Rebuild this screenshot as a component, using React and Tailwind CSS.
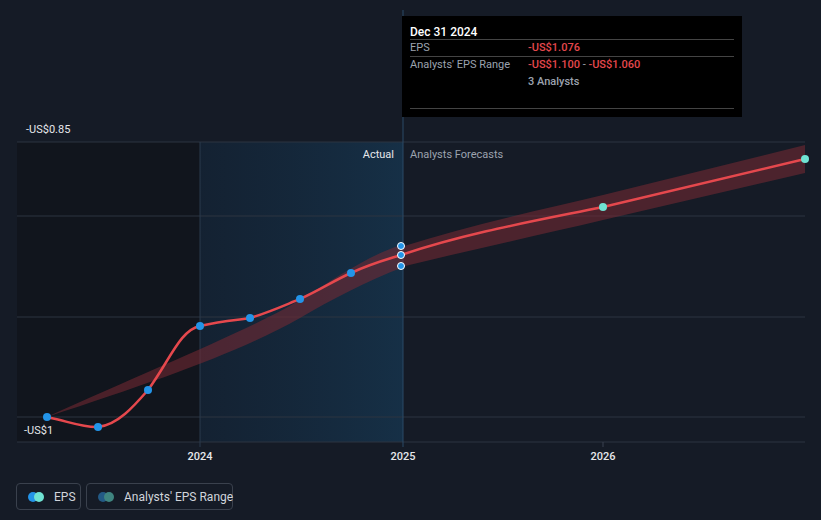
export default function App() {
  const past = [[47,417],[98,427],[148,390],[200,326],[250,318],[300,299],[351,273],[401,255]];
  return (
    <div className="w-[821px] h-[520px] bg-[#151b26] relative overflow-hidden" style={{fontFamily:'Roboto, "Liberation Sans", sans-serif'}}>
      <svg width="821" height="470" className="block">
        <defs>
          <linearGradient id="g" x1="0" x2="1">
            <stop offset="0" stopColor="#13263a" stopOpacity="0.6"/>
            <stop offset="1" stopColor="#16324a" stopOpacity="0.9"/>
          </linearGradient>
        </defs>
        <rect x="17" y="142" width="183" height="300" fill="#11151d"/>
        <rect x="200" y="142" width="203" height="300" fill="url(#g)"/>
        {[142,216,317,417].map(y=> <line key={y} x1="17" x2="805" y1={y} y2={y} stroke="#2d3440" strokeWidth="1"/>)}
        <line x1="17" x2="805" y1="442" y2="442" stroke="#2d3440"/>
        <line x1="200" x2="200" y1="142" y2="447" stroke="#2a3a4c"/>
        <line x1="403" x2="403" y1="10" y2="447" stroke="#2a4a66"/>
        <line x1="603" x2="603" y1="442" y2="447" stroke="#3a4250"/>
        <text x="26" y="133" fill="#e5e7eb" fontSize="11">-US$0.85</text>
        <text x="24" y="434" fill="#e5e7eb" fontSize="11">-US$1</text>
        <text x="394" y="158" fill="#e5e7eb" fontSize="11" textAnchor="end">Actual</text>
        <text x="410" y="158" fill="#9ca3af" fontSize="11">Analysts Forecasts</text>
        {[[200,"2024"],[403,"2025"],[603,"2026"]].map(([x,t])=> <text key={t} x={x} y="460" fill="#e5e7eb" fontSize="11" textAnchor="middle" fontWeight="500">{t}</text>)}
        <path d="M47 417 C150 370 250 330 300 300 C340 275 370 255 401 245 L401 268 C370 280 330 300 300 318 C240 352 160 380 47 417 Z" fill="#7a2a33" opacity="0.55"/>
        <path d="M401 247 C470 225 540 210 603 195 L805 145 L805 173 L603 220 C540 235 470 250 401 267 Z" fill="#7a2a33" opacity="0.55"/>
        <path d="M47 417 C70 422 85 428 98 427 C118 425 135 405 148 390 C170 360 180 330 200 326 C225 320 240 320 250 318 C270 312 285 305 300 299 C320 290 335 280 351 273 C370 264 385 260 401 255 C470 232 540 220 603 207 L805 159" fill="none" stroke="#e5484d" strokeWidth="2.5"/>
        {past.slice(0,7).map(([x,y])=> <circle key={x} cx={x} cy={y} r="4" fill="#2394e8"/>)}
        {[246,255,266].map(y=> <circle key={y} cx="401" cy={y} r="3.5" fill="#2394e8" stroke="#fff" strokeWidth="1"/>)}
        <circle cx="603" cy="207" r="4" fill="#6fe3d3"/>
        <circle cx="805" cy="159" r="4" fill="#6fe3d3"/>
      </svg>
      <div className="absolute left-[402px] top-[16px] w-[340px] h-[101px] bg-black px-2 pt-[7px] text-[11px]">
        <div className="text-white text-[12px] font-medium h-[16px]">Dec 31 2024</div>
        <div className="border-t border-[#444] flex h-[17px] items-center"><span className="w-[118px] text-[#9ca3af]">EPS</span><span className="text-[#e5484d] font-medium">-US$1.076</span></div>
        <div className="border-t border-[#444] flex h-[18px] items-center"><span className="w-[118px] text-[#9ca3af]">Analysts' EPS Range</span><span className="text-[#e5484d] font-medium">-US$1.100</span><span className="text-[#9ca3af]">&nbsp;-&nbsp;</span><span className="text-[#e5484d] font-medium">-US$1.060</span></div>
        <div className="flex h-[17px] items-center"><span className="w-[118px]"></span><span className="text-[#9ca3af] font-medium">3 Analysts</span></div>
        <div className="border-t border-[#444] mt-[17px]"></div>
      </div>
      <div className="flex gap-[5px] ml-[16px] mt-[13px] text-[12px] text-[#d1d5db]">
        <div className="flex items-center gap-[10px] h-[27px] w-[65px] pl-[11px] border border-[#3a414d] rounded-sm">
          <span className="flex"><span className="w-[10px] h-[10px] rounded-full bg-[#2394e8]"></span><span className="w-[10px] h-[10px] rounded-full bg-[#6fe3d3] -ml-[4px]"></span></span>
          <span>EPS</span>
        </div>
        <div className="flex items-center gap-[10px] h-[27px] w-[147px] pl-[11px] border border-[#3a414d] rounded-sm">
          <span className="flex"><span className="w-[10px] h-[10px] rounded-full bg-[#235a85]"></span><span className="w-[10px] h-[10px] rounded-full bg-[#3f8580] -ml-[4px]"></span></span>
          <span className="whitespace-nowrap">Analysts' EPS Range</span>
        </div>
      </div>
    </div>
  );
}
